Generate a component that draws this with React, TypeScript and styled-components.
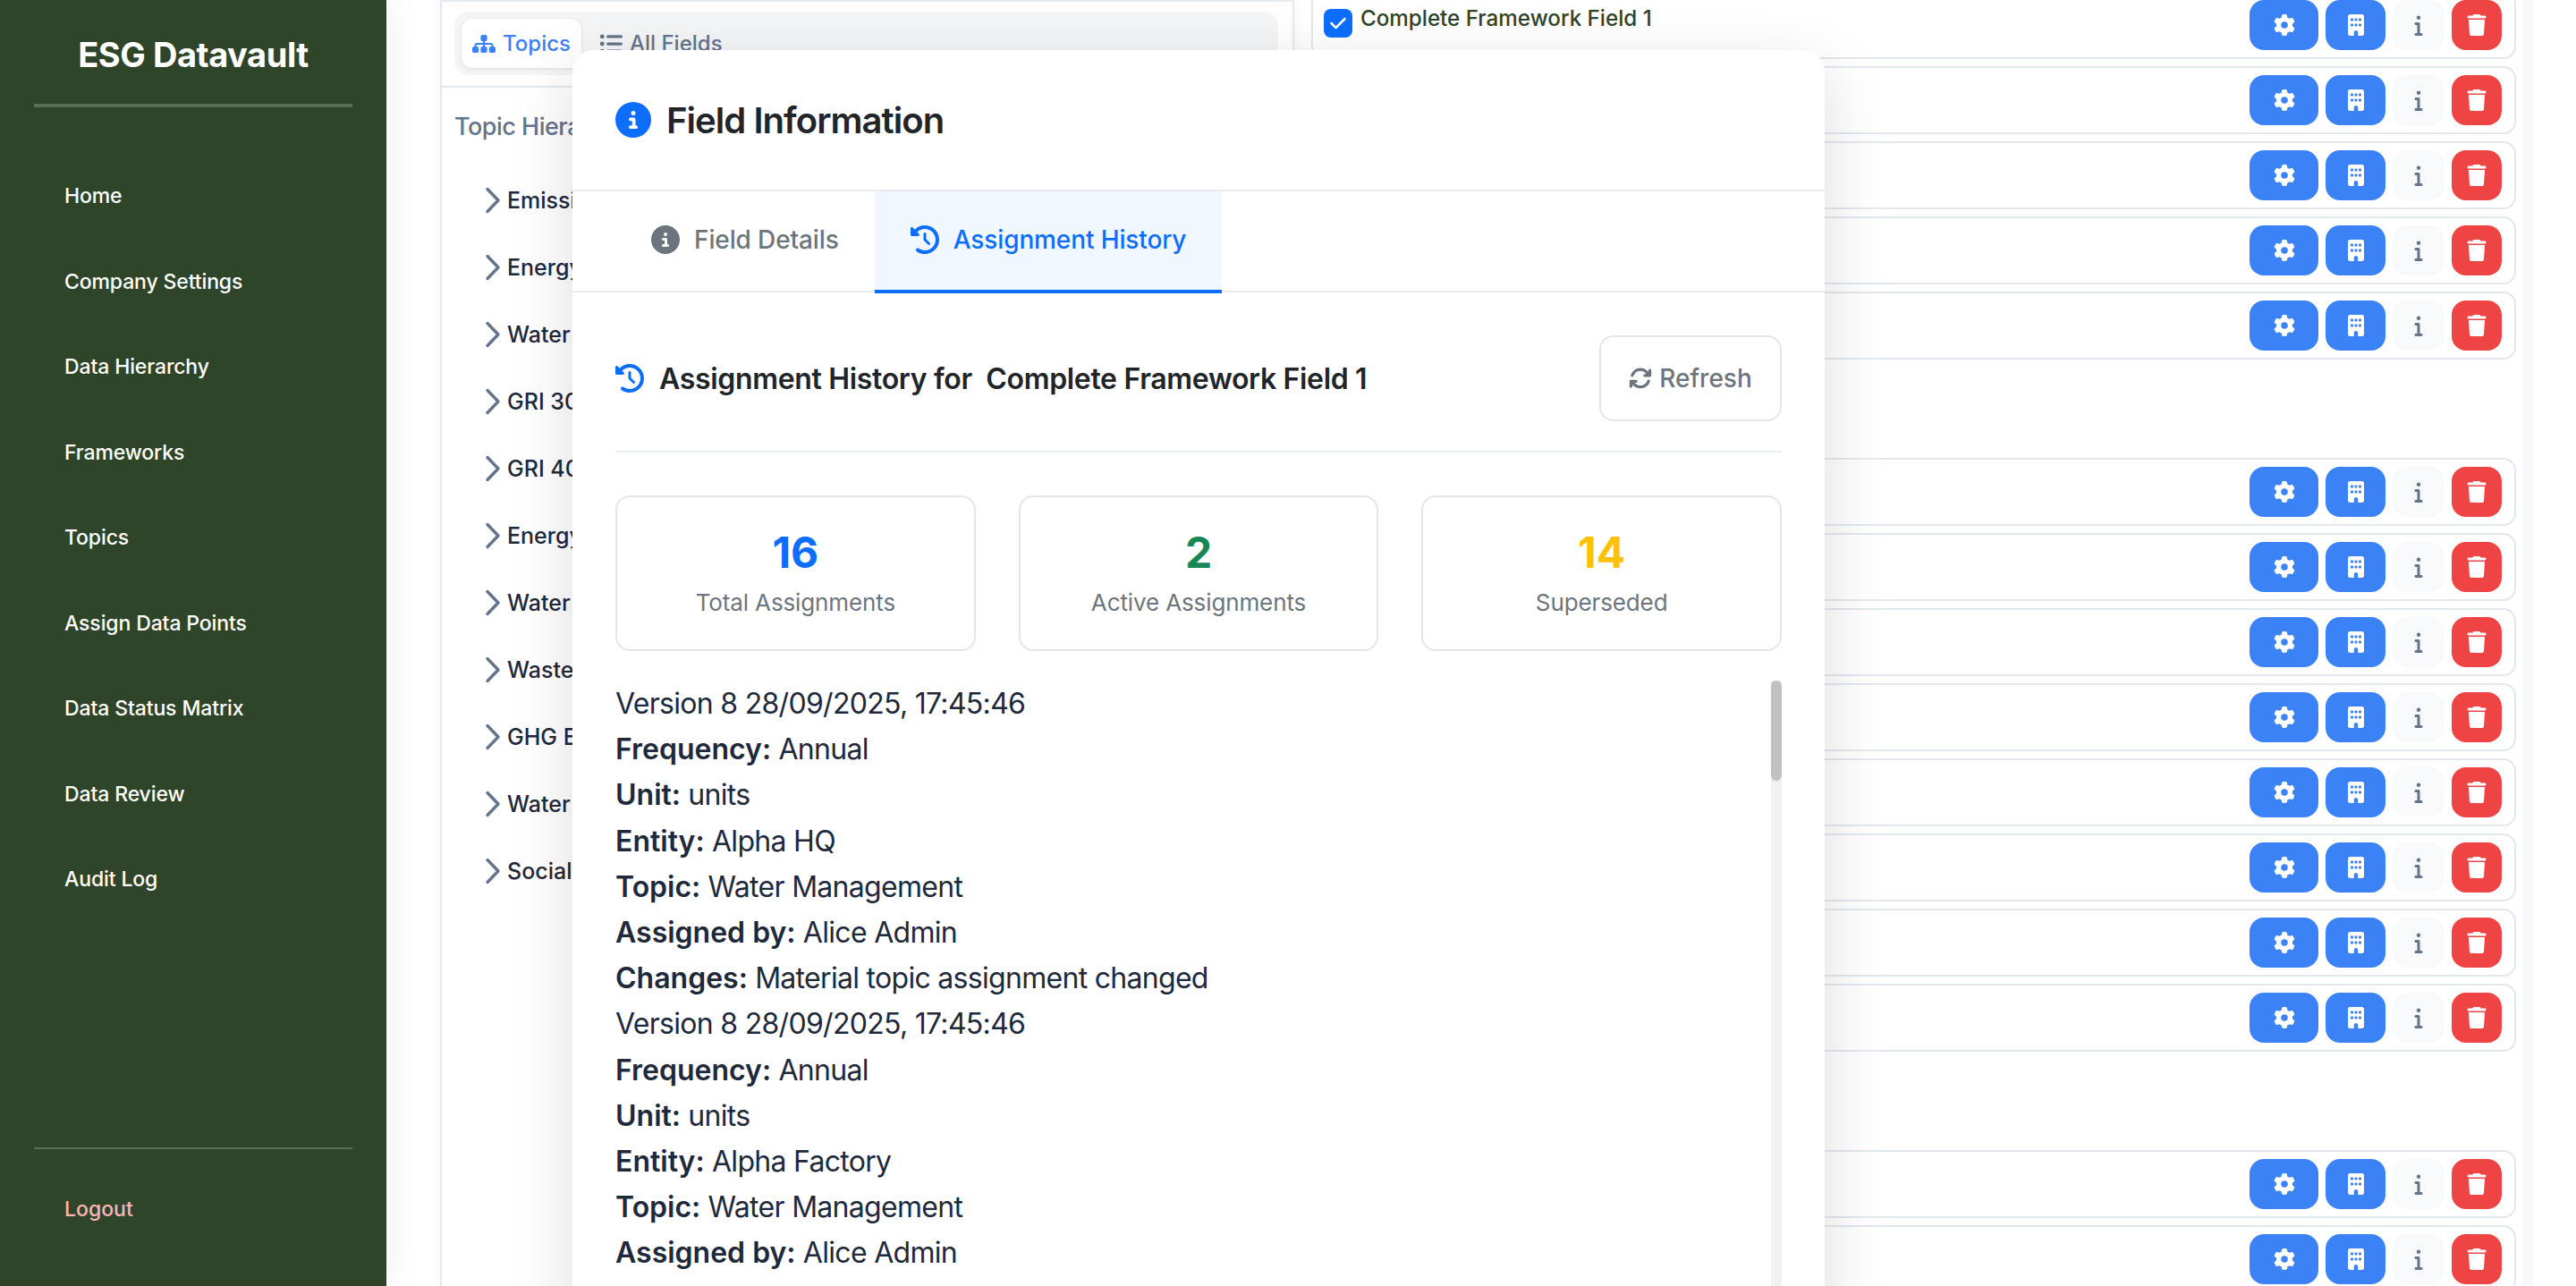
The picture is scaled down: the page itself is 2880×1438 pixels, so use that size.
import React from "react";
import styled, { createGlobalStyle } from "styled-components";
import {
  FaArrowsRotate,
  FaBuilding,
  FaCheck,
  FaCircleInfo,
  FaClockRotateLeft,
  FaGear,
  FaInfo,
  FaListUl,
  FaSitemap,
  FaTrash,
} from "react-icons/fa6";

const navItems = [
  "Home",
  "Company Settings",
  "Data Hierarchy",
  "Frameworks",
  "Topics",
  "Assign Data Points",
  "Data Status Matrix",
  "Data Review",
  "Audit Log",
];

const topics = [
  "Emissions",
  "Energy",
  "Water",
  "GRI 300",
  "GRI 400",
  "Energy Use",
  "Water",
  "Waste",
  "GHG Emissions",
  "Water",
  "Social",
];

const history = [
  { entity: "Alpha HQ", changes: true },
  { entity: "Alpha Factory", changes: false },
];

const rowGroups = [5, 8, 2];

function FieldRow({ label }: { label?: string }) {
  return (
    <Row>
      {label ? (
        <RowLabel>
          <Check>
            <FaCheck size={20} />
          </Check>
          <span>{label}</span>
        </RowLabel>
      ) : (
        <span />
      )}
      <RowActions>
        <ActionButton $variant="gear">
          <FaGear size={24} />
        </ActionButton>
        <ActionButton $variant="building">
          <FaBuilding size={24} />
        </ActionButton>
        <ActionButton $variant="info">
          <FaInfo size={24} />
        </ActionButton>
        <ActionButton $variant="trash">
          <FaTrash size={24} />
        </ActionButton>
      </RowActions>
    </Row>
  );
}

export default function App() {
  return (
    <Page>
      <GlobalStyle />
      <Sidebar>
        <Brand>ESG Datavault</Brand>
        <Nav>
          {navItems.map((item) => (
            <NavItem key={item}>{item}</NavItem>
          ))}
        </Nav>
        <SidebarFooter>
          <Logout>Logout</Logout>
        </SidebarFooter>
      </Sidebar>

      <Main>
        <TopicsPanel>
          <PanelTabsWrap>
            <PanelTabs>
              <PanelTab $active>
                <FaSitemap size={26} />
                Topics
              </PanelTab>
              <PanelTab>
                <FaListUl size={26} />
                All Fields
              </PanelTab>
            </PanelTabs>
          </PanelTabsWrap>
          <PanelBody>
            <PanelHeading>Topic Hierarchy</PanelHeading>
            {topics.map((topic, i) => (
              <TreeItem key={i}>
                <svg width="18" height="30" viewBox="0 0 18 30" fill="none">
                  <path d="M3 2.5 L15 15 L3 27.5" stroke="#64748b" strokeWidth="3.4" strokeLinecap="round" strokeLinejoin="round" />
                </svg>
                <span>{topic}</span>
              </TreeItem>
            ))}
          </PanelBody>
        </TopicsPanel>

        <FieldsColumn>
          {rowGroups.map((count, g) => (
            <RowGroup key={g}>
              {Array.from({ length: count }).map((_, i) => (
                <FieldRow key={i} label={g === 0 && i === 0 ? "Complete Framework Field 1" : undefined} />
              ))}
            </RowGroup>
          ))}
        </FieldsColumn>
        <EdgeStrip />
      </Main>

      <Modal>
        <ModalHeader>
          <FaCircleInfo size={40} color="#0d6efd" />
          <ModalTitle>Field Information</ModalTitle>
        </ModalHeader>
        <ModalTabs>
          <ModalTab>
            <FaCircleInfo size={32} />
            Field Details
          </ModalTab>
          <ModalTab $active>
            <FaClockRotateLeft size={32} />
            Assignment History
          </ModalTab>
        </ModalTabs>
        <ModalBody>
          <HistoryHead>
            <HistoryTitle>
              <FaClockRotateLeft size={32} color="#0d6efd" />
              Assignment History for&nbsp; Complete Framework Field 1
            </HistoryTitle>
            <RefreshButton>
              <FaArrowsRotate size={26} />
              Refresh
            </RefreshButton>
          </HistoryHead>
          <Stats>
            <StatCard>
              <StatValue $color="#0d6efd">16</StatValue>
              <StatLabel>Total Assignments</StatLabel>
            </StatCard>
            <StatCard>
              <StatValue $color="#198754">2</StatValue>
              <StatLabel>Active Assignments</StatLabel>
            </StatCard>
            <StatCard>
              <StatValue $color="#ffc107">14</StatValue>
              <StatLabel>Superseded</StatLabel>
            </StatCard>
          </Stats>
          <HistoryList>
            <HistoryEntries>
              {history.map((h) => (
                <div key={h.entity}>
                  <div>Version 8 28/09/2025, 17:45:46</div>
                  <div>
                    <b>Frequency:</b> Annual
                  </div>
                  <div>
                    <b>Unit:</b> units
                  </div>
                  <div>
                    <b>Entity:</b> {h.entity}
                  </div>
                  <div>
                    <b>Topic:</b> Water Management
                  </div>
                  <div>
                    <b>Assigned by:</b> Alice Admin
                  </div>
                  {h.changes && (
                    <div>
                      <b>Changes:</b> Material topic assignment changed
                    </div>
                  )}
                </div>
              ))}
            </HistoryEntries>
            <ScrollTrack>
              <ScrollThumb />
            </ScrollTrack>
          </HistoryList>
        </ModalBody>
      </Modal>
    </Page>
  );
}

const GlobalStyle = createGlobalStyle`
  html, body {
    margin: 0;
    height: 100%;
    overflow: hidden;
    background: #fff;
  }
  * {
    box-sizing: border-box;
  }
  body {
    font-family: Inter, "Liberation Sans", sans-serif;
  }
`;

const Page = styled.div`
  display: flex;
  width: 2880px;
  height: 1438px;
  overflow: hidden;
  position: relative;
`;

const Sidebar = styled.aside`
  width: 432px;
  height: 1438px;
  flex-shrink: 0;
  display: flex;
  flex-direction: column;
  background: #2f4529;
  color: #fff;
  padding: 0 38px;
  box-shadow: 0 0 40px rgba(0, 0, 0, 0.08);
  z-index: 1;
`;

const Brand = styled.div`
  height: 120px;
  border-bottom: 4px solid #5a6d55;
  text-align: center;
  font-size: 38px;
  font-weight: 700;
  line-height: 122px;
  letter-spacing: -0.45px;
`;

const Nav = styled.nav`
  display: flex;
  flex-direction: column;
  padding-top: 52px;
  flex: 1;
`;

const NavItem = styled.div`
  height: 95.5px;
  line-height: 95.5px;
  padding-left: 34px;
  font-size: 23px;
  font-weight: 500;
  letter-spacing: -0.12px;
`;

const SidebarFooter = styled.div`
  height: 155px;
  border-top: 2px solid #5a6d55;
  padding-left: 34px;
`;

const Logout = styled.div`
  margin-top: 53px;
  font-size: 23px;
  line-height: 28px;
  font-weight: 500;
  color: #fdb4b4;
`;

const Main = styled.main`
  flex: 1;
  display: flex;
  align-items: flex-start;
  padding-left: 60px;
  height: 1438px;
  background: #fff;
`;

const TopicsPanel = styled.section`
  width: 955px;
  height: 1438px;
  flex-shrink: 0;
  border: 2px solid #e6eaf0;
  border-bottom: 0;
  box-shadow: 0 0 10px rgba(148, 163, 184, 0.12);
`;

const PanelTabsWrap = styled.div`
  height: 96px;
  padding: 11px 16px 0 14px;
  border-bottom: 2px solid #e2e8f0;
`;

const PanelTabs = styled.div`
  display: flex;
  align-items: center;
  gap: 8px;
  height: 71px;
  padding: 0 8px;
  border-radius: 16px;
  background: #f4f5f7;
`;

const PanelTab = styled.div<{ $active?: boolean }>`
  display: flex;
  align-items: center;
  gap: 8px;
  height: 55px;
  padding: 0 12px;
  border-radius: 12px;
  font-size: 24px;
  font-weight: 500;
  color: ${(p) => (p.$active ? "#3b82f6" : "#64748b")};
  background: ${(p) => (p.$active ? "#fff" : "transparent")};
  box-shadow: ${(p) => (p.$active ? "0 1px 4px rgba(0,0,0,0.1)" : "none")};
`;

const PanelBody = styled.div`
  padding: 26px 14px 0;
`;

const PanelHeading = styled.div`
  font-size: 27px;
  font-weight: 500;
  letter-spacing: -0.5px;
  color: #64748b;
  line-height: 36px;
  margin-bottom: 26px;
`;

const TreeItem = styled.div`
  display: flex;
  align-items: center;
  gap: 7px;
  height: 75.1px;
  padding-left: 34px;
  font-size: 25px;
  font-weight: 500;
  color: #1e293b;
`;

const FieldsColumn = styled.div`
  width: 1347px;
  margin-left: 19px;
  margin-top: -10px;
  display: flex;
  flex-direction: column;
  gap: 110px;
  flex-shrink: 0;
`;

const RowGroup = styled.div`
  display: flex;
  flex-direction: column;
  gap: 8px;
`;

const Row = styled.div`
  display: flex;
  align-items: center;
  justify-content: space-between;
  height: 76px;
  padding: 0 14px 0 12px;
  border: 2px solid #e2e8f0;
  border-radius: 14px;
  background: #fff;
`;

const RowLabel = styled.label`
  display: flex;
  align-items: flex-start;
  gap: 9px;
  align-self: flex-start;
  margin-top: 18px;
  font-size: 24.2px;
  line-height: 21px;
  font-weight: 500;
  color: #2f4529;
`;

const Check = styled.span`
  width: 32px;
  height: 32px;
  border-radius: 8px;
  background: #0d6efd;
  color: #fff;
  display: flex;
  align-items: center;
  justify-content: center;
`;

const RowActions = styled.div`
  display: flex;
  gap: 8px;
`;

const actionStyles = {
  gear: { width: "77px", bg: "#3b82f6", fg: "#fff" },
  building: { width: "67px", bg: "#3b82f6", fg: "#fff" },
  info: { width: "58px", bg: "#f8f9fb", fg: "#64748b" },
  trash: { width: "56px", bg: "#ef4444", fg: "#fff" },
};

const ActionButton = styled.button<{ $variant: keyof typeof actionStyles }>`
  width: ${(p) => actionStyles[p.$variant].width};
  height: 56px;
  padding: 0;
  border: 0;
  border-radius: 16px;
  display: flex;
  align-items: center;
  justify-content: center;
  background: ${(p) => actionStyles[p.$variant].bg};
  color: ${(p) => actionStyles[p.$variant].fg};
`;

const EdgeStrip = styled.div`
  width: 12px;
  height: 1438px;
  margin-left: 7px;
  flex-shrink: 0;
  background: #f7f8fb;
`;

const Modal = styled.div`
  position: absolute;
  left: 640px;
  top: 56px;
  width: 1400px;
  height: 1500px;
  z-index: 5;
  background: #fff;
  border-radius: 24px 24px 0 0;
  box-shadow: 0 20px 70px rgba(0, 0, 0, 0.14);
`;

const ModalHeader = styled.header`
  height: 158px;
  padding: 0 48px;
  display: flex;
  align-items: center;
  gap: 17px;
  border-bottom: 2px solid #e9ecef;
`;

const ModalTitle = styled.h2`
  margin: 0;
  font-size: 40px;
  font-weight: 600;
  letter-spacing: -0.95px;
  color: #212529;
`;

const ModalTabs = styled.div`
  display: flex;
  height: 113px;
  padding-left: 48px;
  border-bottom: 2px solid #e9ecef;
`;

const ModalTab = styled.div<{ $active?: boolean }>`
  display: flex;
  align-items: center;
  gap: 16px;
  height: 114px;
  padding: 0 40px 3px;
  font-size: 28px;
  font-weight: 500;
  letter-spacing: -0.12px;
  color: ${(p) => (p.$active ? "#0d6efd" : "#6c757d")};
  background: ${(p) => (p.$active ? "#f0f7ff" : "transparent")};
  border-bottom: 4px solid ${(p) => (p.$active ? "#0d6efd" : "transparent")};
`;

const ModalBody = styled.div`
  padding: 48px 48px 0;
`;

const HistoryHead = styled.div`
  display: flex;
  align-items: center;
  justify-content: space-between;
  padding-bottom: 33px;
  border-bottom: 2px solid #e9ecef;
`;

const HistoryTitle = styled.h3`
  margin: 0;
  display: flex;
  align-items: center;
  gap: 17px;
  font-size: 32px;
  font-weight: 600;
  letter-spacing: -0.33px;
  color: #212529;
`;

const RefreshButton = styled.button`
  width: 204px;
  height: 96px;
  display: flex;
  align-items: center;
  justify-content: center;
  gap: 8px;
  background: #fff;
  border: 2px solid #e4e6ea;
  border-radius: 16px;
  font-family: inherit;
  font-size: 28px;
  font-weight: 500;
  color: #6c757d;
`;

const Stats = styled.div`
  display: grid;
  grid-template-columns: repeat(3, 1fr);
  gap: 48px;
  margin-top: 48px;
`;

const StatCard = styled.div`
  height: 174px;
  border: 2px solid #e4e6ea;
  border-radius: 16px;
  padding-top: 33px;
  text-align: center;
`;

const StatValue = styled.div<{ $color: string }>`
  font-size: 48px;
  line-height: 58px;
  font-weight: 700;
  color: ${(p) => p.$color};
`;

const StatLabel = styled.div`
  margin-top: 11px;
  font-size: 26px;
  line-height: 32px;
  letter-spacing: -0.12px;
  color: #6c757d;
`;

const HistoryList = styled.div`
  display: flex;
  justify-content: space-between;
  margin-top: 33px;
  height: 700px;
`;

const HistoryEntries = styled.div`
  font-size: 32px;
  line-height: 51.2px;
  letter-spacing: -0.7px;
  color: #1e293b;
  b {
    font-weight: 600;
    letter-spacing: 0;
  }
`;

const ScrollTrack = styled.div`
  width: 12px;
  height: 100%;
  background: #f1f1f1;
`;

const ScrollThumb = styled.div`
  height: 112px;
  background: #c1c1c1;
  border-radius: 6px;
`;
